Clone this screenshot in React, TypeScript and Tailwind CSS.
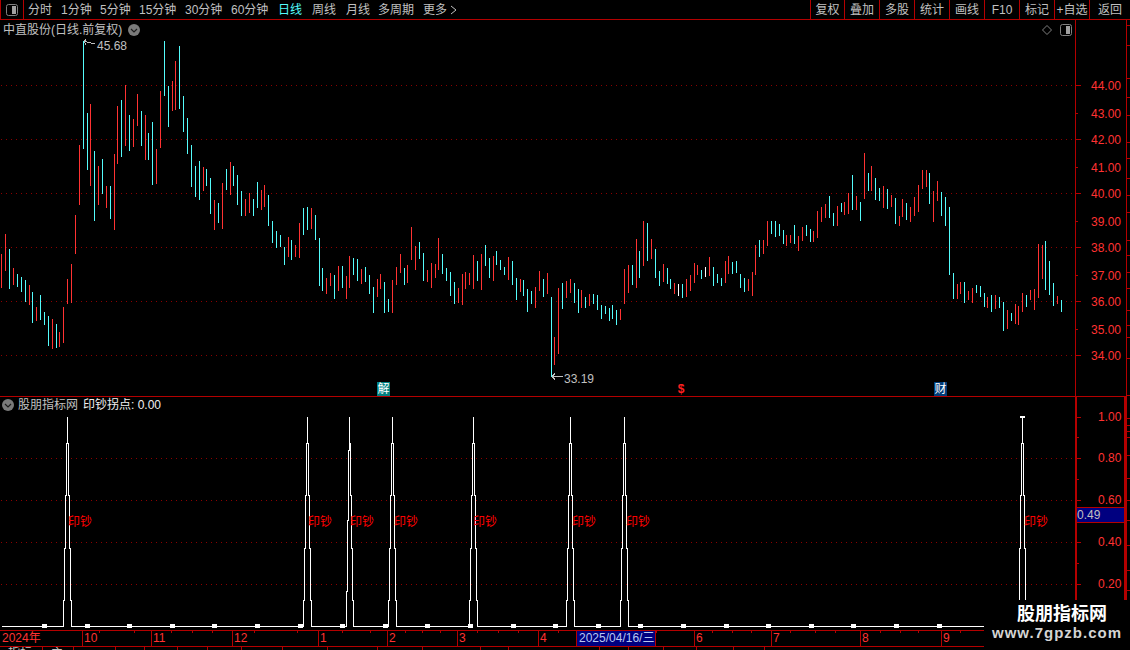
type Bar = [number, number, number, 'r' | 'c' | 'w'];

const BAR_COLORS = { r: '#ff3232', c: '#54fcfc', w: '#ffffff' };

// x, high y, low y, colour - read off the chart in page pixels
const BARS: Bar[] = [
  [1, 254, 287, 'r'], [5, 234, 270, 'r'], [9, 249, 288, 'c'], [13, 268, 284, 'r'], [17, 274, 286, 'c'],
  [21, 277, 291, 'c'], [25, 280, 301, 'c'], [29, 285, 304, 'r'], [32, 292, 322, 'c'], [36, 307, 320, 'r'],
  [40, 295, 319, 'c'], [44, 312, 324, 'c'], [48, 316, 345, 'c'], [52, 319, 348, 'r'], [56, 324, 347, 'c'],
  [59, 332, 346, 'r'], [63, 307, 342, 'r'], [67, 279, 303, 'r'], [71, 264, 302, 'r'], [75, 215, 253, 'r'],
  [79, 145, 204, 'r'], [83, 41, 148, 'c'], [87, 113, 169, 'c'], [90, 104, 185, 'r'], [94, 151, 220, 'c'],
  [98, 166, 204, 'r'], [102, 159, 193, 'c'], [106, 186, 207, 'r'], [110, 186, 218, 'c'], [114, 154, 229, 'r'],
  [117, 106, 163, 'r'], [121, 100, 156, 'c'], [125, 85, 145, 'r'], [129, 115, 150, 'c'], [133, 119, 146, 'r'],
  [137, 94, 125, 'r'], [141, 111, 145, 'c'], [145, 115, 159, 'r'], [148, 133, 159, 'c'], [152, 122, 184, 'c'],
  [156, 149, 183, 'r'], [160, 91, 147, 'r'], [164, 41, 95, 'c'], [168, 86, 126, 'c'], [172, 81, 110, 'r'],
  [175, 61, 109, 'r'], [179, 46, 108, 'c'], [183, 96, 131, 'c'], [187, 118, 153, 'c'], [191, 145, 186, 'c'],
  [195, 166, 196, 'c'], [199, 161, 199, 'c'], [203, 167, 190, 'r'], [206, 169, 185, 'c'], [210, 178, 213, 'c'],
  [214, 200, 229, 'r'], [218, 203, 222, 'c'], [222, 183, 228, 'r'], [226, 169, 189, 'c'], [230, 162, 194, 'r'],
  [233, 166, 185, 'c'], [237, 175, 204, 'c'], [241, 191, 215, 'c'], [245, 199, 215, 'r'], [249, 193, 212, 'r'],
  [253, 199, 215, 'c'], [257, 182, 207, 'c'], [261, 190, 209, 'r'], [264, 185, 206, 'r'], [268, 195, 225, 'c'],
  [272, 221, 242, 'c'], [276, 231, 247, 'c'], [280, 235, 246, 'c'], [284, 247, 264, 'c'], [288, 237, 256, 'r'],
  [291, 240, 259, 'c'], [295, 245, 256, 'r'], [299, 223, 257, 'r'], [303, 208, 234, 'c'], [307, 207, 229, 'c'],
  [311, 208, 228, 'r'], [315, 215, 239, 'c'], [319, 238, 285, 'c'], [322, 268, 290, 'c'], [326, 278, 293, 'r'],
  [330, 273, 285, 'r'], [334, 275, 298, 'c'], [338, 266, 290, 'r'], [342, 266, 287, 'c'], [346, 276, 298, 'r'],
  [349, 256, 287, 'r'], [353, 258, 274, 'c'], [357, 259, 280, 'c'], [361, 269, 283, 'r'], [365, 267, 281, 'c'],
  [369, 275, 293, 'c'], [373, 287, 312, 'c'], [377, 279, 296, 'r'], [380, 274, 288, 'r'], [384, 282, 312, 'c'],
  [388, 299, 311, 'c'], [392, 280, 312, 'r'], [396, 267, 284, 'r'], [400, 254, 272, 'r'], [404, 268, 284, 'c'],
  [407, 265, 282, 'r'], [411, 227, 259, 'r'], [415, 246, 269, 'r'], [419, 242, 258, 'c'], [423, 253, 280, 'c'],
  [427, 270, 281, 'r'], [431, 263, 287, 'r'], [435, 264, 277, 'r'], [438, 238, 269, 'r'], [442, 254, 273, 'c'],
  [446, 268, 280, 'c'], [450, 272, 295, 'c'], [454, 282, 303, 'c'], [458, 288, 302, 'r'], [462, 274, 304, 'r'],
  [465, 272, 288, 'r'], [469, 273, 284, 'r'], [473, 255, 288, 'r'], [477, 261, 280, 'c'], [481, 254, 289, 'r'],
  [485, 245, 265, 'c'], [489, 258, 277, 'c'], [493, 256, 280, 'r'], [496, 251, 264, 'c'], [500, 260, 269, 'c'],
  [504, 267, 274, 'c'], [508, 257, 279, 'r'], [512, 261, 284, 'c'], [516, 278, 299, 'c'], [520, 279, 291, 'r'],
  [523, 280, 295, 'c'], [527, 289, 311, 'c'], [531, 291, 303, 'c'], [535, 287, 307, 'r'], [539, 271, 290, 'r'],
  [543, 279, 296, 'c'], [547, 273, 293, 'r'], [551, 297, 376, 'c'], [554, 337, 364, 'r'], [558, 288, 353, 'r'],
  [562, 283, 308, 'c'], [566, 281, 297, 'r'], [570, 279, 292, 'r'], [574, 283, 302, 'c'], [578, 289, 312, 'c'],
  [581, 290, 307, 'r'], [585, 297, 307, 'c'], [589, 294, 305, 'r'], [593, 294, 303, 'c'], [597, 295, 309, 'c'],
  [601, 305, 318, 'c'], [605, 306, 313, 'c'], [609, 308, 320, 'c'], [612, 305, 318, 'c'], [616, 310, 324, 'c'],
  [620, 309, 319, 'r'], [624, 269, 303, 'r'], [628, 265, 292, 'r'], [632, 265, 284, 'c'], [636, 239, 287, 'r'],
  [639, 251, 277, 'c'], [643, 221, 265, 'r'], [647, 223, 260, 'c'], [651, 239, 258, 'r'], [655, 249, 277, 'c'],
  [659, 271, 285, 'c'], [663, 264, 281, 'r'], [667, 268, 283, 'c'], [670, 279, 288, 'c'], [674, 283, 293, 'r'],
  [678, 284, 295, 'w'], [682, 284, 297, 'c'], [686, 279, 296, 'r'], [690, 275, 290, 'r'], [694, 263, 282, 'r'],
  [697, 265, 274, 'r'], [701, 270, 278, 'c'], [705, 267, 276, 'w'], [709, 257, 275, 'r'], [713, 267, 285, 'c'],
  [717, 274, 282, 'c'], [721, 278, 285, 'c'], [725, 261, 282, 'r'], [728, 256, 273, 'r'], [732, 262, 273, 'c'],
  [736, 261, 272, 'c'], [740, 274, 287, 'c'], [744, 278, 291, 'c'], [748, 279, 290, 'r'], [752, 272, 295, 'r'],
  [755, 245, 274, 'r'], [759, 240, 256, 'c'], [763, 240, 253, 'r'], [767, 221, 245, 'r'], [771, 221, 233, 'c'],
  [775, 221, 236, 'c'], [779, 224, 235, 'c'], [783, 230, 243, 'c'], [786, 235, 245, 'r'], [790, 235, 242, 'r'],
  [794, 225, 243, 'c'], [798, 236, 250, 'r'], [802, 227, 240, 'r'], [806, 225, 235, 'c'], [810, 229, 241, 'c'],
  [813, 231, 241, 'r'], [817, 211, 237, 'r'], [821, 207, 221, 'r'], [825, 204, 217, 'r'], [829, 196, 217, 'c'],
  [833, 213, 225, 'c'], [837, 206, 225, 'r'], [841, 203, 211, 'c'], [844, 202, 214, 'r'], [848, 193, 213, 'r'],
  [852, 175, 209, 'c'], [856, 196, 209, 'r'], [860, 202, 220, 'c'], [864, 153, 198, 'r'], [868, 173, 190, 'c'],
  [871, 166, 190, 'r'], [875, 178, 199, 'c'], [879, 188, 200, 'c'], [883, 186, 207, 'r'], [887, 189, 208, 'c'],
  [891, 195, 206, 'r'], [895, 198, 223, 'c'], [899, 216, 225, 'r'], [902, 199, 216, 'r'], [906, 203, 219, 'c'],
  [910, 207, 221, 'r'], [914, 197, 215, 'r'], [918, 185, 211, 'r'], [922, 170, 188, 'r'], [926, 170, 186, 'r'],
  [929, 173, 203, 'c'], [933, 191, 221, 'r'], [937, 181, 200, 'r'], [941, 192, 215, 'c'], [945, 197, 225, 'c'],
  [949, 207, 274, 'c'], [953, 273, 298, 'c'], [957, 284, 298, 'r'], [960, 282, 293, 'r'], [964, 282, 302, 'c'],
  [968, 291, 299, 'r'], [972, 288, 302, 'r'], [976, 285, 292, 'c'], [980, 286, 296, 'c'], [984, 293, 306, 'c'],
  [987, 297, 307, 'r'], [991, 295, 311, 'c'], [995, 295, 308, 'r'], [999, 297, 307, 'c'], [1003, 302, 330, 'c'],
  [1007, 310, 328, 'r'], [1011, 313, 320, 'c'], [1015, 304, 323, 'r'], [1018, 306, 324, 'r'], [1022, 293, 311, 'r'],
  [1026, 295, 306, 'c'], [1030, 290, 299, 'r'], [1034, 289, 309, 'r'], [1038, 244, 297, 'r'], [1042, 245, 278, 'r'],
  [1045, 241, 289, 'c'], [1049, 261, 294, 'c'], [1053, 283, 305, 'c'], [1057, 296, 303, 'r'], [1061, 300, 311, 'c'],
];

const PERIOD_TABS = [
  { label: '分时', width: 'w-[24px]' },
  { label: '1分钟', width: 'w-[30px]' },
  { label: '5分钟', width: 'w-[30px]' },
  { label: '15分钟', width: 'w-[37px]' },
  { label: '30分钟', width: 'w-[37px]' },
  { label: '60分钟', width: 'w-[38px]' },
  { label: '日线', width: 'w-[25px]', active: true },
  { label: '周线', width: 'w-[25px]' },
  { label: '月线', width: 'w-[23px]' },
  { label: '多周期', width: 'w-[36px]' },
  { label: '更多', width: 'w-[24px]' },
];

const ACTIONS = [
  { label: '复权', width: 'w-[34px]' },
  { label: '叠加', width: 'w-[35px]' },
  { label: '多股', width: 'w-[35px]' },
  { label: '统计', width: 'w-[35px]' },
  { label: '画线', width: 'w-[35px]' },
  { label: 'F10', width: 'w-[35px]' },
  { label: '标记', width: 'w-[35px]' },
  { label: '+自选', width: 'w-[35px]' },
  { label: '返回', width: 'w-[41px]' },
];

const PRICES = ['44.00', '43.00', '42.00', '41.00', '40.00', '39.00', '38.00', '37.00', '36.00', '35.00', '34.00'];
const SIGNALS = ['1.00', '0.80', '0.60', '0.40', '0.20'];
const SPIKES = [67, 307, 392, 473, 570, 624, 1022];

const MONTHS = [
  { label: '2024年', width: 'w-[83px]', pad: 'pl-[2px]' },
  { label: '10', width: 'w-[69px]', pad: 'pl-px' },
  { label: '11', width: 'w-[81px]', pad: 'pl-px' },
  { label: '12', width: 'w-[86px]', pad: 'pl-px' },
  { label: '1', width: 'w-[69px]', pad: 'pl-px' },
  { label: '2', width: 'w-[70px]', pad: 'pl-px' },
  { label: '3', width: 'w-[81px]', pad: 'pl-px' },
  { label: '4', width: 'w-[38px]', pad: 'pl-px' },
];
const MONTHS_AFTER = [
  { label: '', width: 'w-[39px]' },
  { label: '6', width: 'w-[77px]' },
  { label: '7', width: 'w-[89px]' },
  { label: '8', width: 'w-[81px]' },
  { label: '9', width: 'w-[60px]' },
];
const TIME_TICKS = [
  99, 134, 171, 192, 212, 254, 297, 342, 370, 405, 422, 440, 477, 498, 518, 558, 656, 712, 732, 751, 790, 815, 835, 880,
  900, 918, 960,
];

const BOTTOM_TABS = [
  { label: '指标', width: 'w-[43px]' },
  { label: '主', width: 'w-[31px]' },
  { width: 'w-[42px]' },
  { width: 'w-[29px]' },
  { width: 'w-[33px]' },
  { width: 'w-[30px]' },
  { width: 'w-[34px]' },
  { width: 'w-[41px]' },
  { width: 'w-[45px]' },
  { width: 'w-[50px]' },
  { width: 'w-[45px]' },
  { width: 'w-[58px]' },
  { width: 'w-[28px]' },
  { width: 'w-[91px]' },
  { width: 'w-[29px]' },
  { width: 'w-[35px]' },
  { width: 'w-[33px]' },
  { width: 'w-[37px]' },
  { width: 'w-[31px]' },
];

const STRIP_TICKS = [
  25, 45, 78, 97, 115, 142, 158, 178, 195, 212, 240, 255, 272, 288, 310, 325, 337, 358, 395, 418, 425, 431, 437, 455, 478,
  500, 520, 545, 570, 590,
];

function spikePath(c: number) {
  return (
    `H${c - 4} V600 H${c - 3} V548 H${c - 2} V495 H${c - 1} V443 H${c} V416 V443 ` +
    `H${c + 1} V495 H${c + 2} V548 H${c + 3} V600 H${c + 4} V626`
  );
}

// the spike at 349 is not symmetrical in the original
const LOPSIDED_SPIKE = 'H346 V591 H347 V520 H348 V450 H349 V416 V443 H350 V495 H351 V548 H352 V600 H353 V626';

function CircleChevron() {
  return (
    <svg width="12" height="12" viewBox="0 0 12 12" className="shrink-0">
      <circle cx="6" cy="6" r="6" fill="#7a7a7a" />
      <path d="M3 5 L6 8 L9 5" fill="none" stroke="#1c1c1c" strokeWidth="1.2" />
    </svg>
  );
}

function PanelIcon() {
  return (
    <svg width="12" height="12" viewBox="0 0 12 12" className="shrink-0">
      <rect x="0.5" y="0.5" width="11" height="11" rx="2" fill="none" stroke="#808080" />
      <rect x="6" y="2" width="4" height="8" fill="#a0a0a0" />
    </svg>
  );
}

function PriceChart() {
  const gridYs = [85, 139, 193, 247, 301, 355];
  return (
    <div className="relative h-[376px] w-[1075px]">
      <svg width="1075" height="376" viewBox="0 20 1075 376" shapeRendering="crispEdges" className="block">
        {gridYs.map((y) => (
          <line key={y} x1="1" x2="1075" y1={y + 0.5} y2={y + 0.5} stroke="#8c0000" strokeDasharray="1 4" />
        ))}
        {BARS.map(([x, top, bottom, color]) => (
          <rect key={x} x={x} y={top} width="1" height={bottom - top + 1} fill={BAR_COLORS[color]} />
        ))}
        <g stroke="#c0c0c0" fill="none">
          <path d="M84 41.5 H87 M84 41.5 L86 39.5 M84 41.5 L86 44.5 M87 42.5 H91 M91 43.5 H95" />
          <path d="M552 376.5 H563 M552 376.5 L555 373.5 M552 376.5 L555 379.5" />
        </g>
      </svg>
      <div className="absolute left-[3px] top-[2px] flex h-[16px] items-center gap-[6px] text-[12px] text-[#c0c0c0]">
        <span>中直股份(日线.前复权)</span>
        <CircleChevron />
      </div>
      <div className="absolute right-[3px] top-[4px] flex items-center gap-[8px]">
        <svg width="10" height="10" viewBox="0 0 10 10">
          <path d="M5 0.5 L9.5 5 L5 9.5 L0.5 5 Z" fill="none" stroke="#808080" />
        </svg>
        <PanelIcon />
      </div>
      <span className="absolute left-[97px] top-[18px] text-[12px] leading-[16px] text-[#c0c0c0]">45.68</span>
      <span className="absolute left-[564px] top-[351px] text-[12px] leading-[16px] text-[#c0c0c0]">33.19</span>
      <span className="absolute left-[377px] top-[362px] flex h-[14px] w-[13px] items-center justify-center bg-[#008080] text-[12px] text-white">
        解
      </span>
      <span className="absolute left-[677px] top-[362px] flex h-[14px] w-[8px] items-center justify-center text-[12px] font-bold text-[#ff2020]">
        $
      </span>
      <span className="absolute left-[934px] top-[362px] flex h-[14px] w-[13px] items-center justify-center bg-[#003c78] text-[12px] text-white">
        财
      </span>
    </div>
  );
}

function PriceAxis() {
  return (
    <div className="flex h-[376px] w-[51px] flex-col border-l border-[#b40000] pt-[52px]">
      {PRICES.map((price, i) => (
        <div key={price} className={`flex h-[27px] items-center ${i % 2 ? 'pt-[2px]' : ''}`}>
          <span className={`h-px bg-[#b40000] ${i % 2 ? 'w-[2px]' : 'w-[5px]'}`} />
          <span className={`text-[12px] text-[#ff3232] ${i % 2 ? 'ml-[13px]' : 'ml-[10px]'}`}>{price}</span>
        </div>
      ))}
    </div>
  );
}

function SignalChart() {
  const [first, ...rest] = SPIKES;
  const baseline = ['M1 626', spikePath(first), spikePath(rest[0]), LOPSIDED_SPIKE, ...rest.slice(1).map(spikePath), 'H1075'];
  return (
    <div className="relative h-[233px] w-[1075px]">
      <svg width="1075" height="233" viewBox="0 397 1075 233" shapeRendering="crispEdges" className="block">
        {[458, 500, 542, 584].map((y) => (
          <line key={y} x1="1" x2="1075" y1={y + 0.5} y2={y + 0.5} stroke="#8c0000" strokeDasharray="1 4" />
        ))}
        <path d={baseline.join(' ')} transform="translate(0.5 0.5)" fill="none" stroke="#ffffff" />
        <rect x="1020" y="416" width="5" height="2" fill="#ffffff" />
        {Array.from({ length: 22 }, (_, i) => Math.round(44 + i * 42.6)).map((x) => (
          <rect key={x} x={x - 2} y="624" width="5" height="4" fill="#ffffff" />
        ))}
      </svg>
      <div className="absolute left-[2px] top-[2px] flex h-[12px] items-center text-[12px]">
        <CircleChevron />
        <span className="ml-[4px] text-[#c0c0c0]">股朋指标网</span>
        <span className="ml-[5px] text-[#f0f0f0]">印钞拐点: 0.00</span>
      </div>
      {[68, 308, 350, 394, 473, 572, 626, 1024].map((x) => (
        <span key={x} className="absolute top-[117px] text-[12px] leading-[16px] text-[#ff0000]" style={{ left: x }}>
          印钞
        </span>
      ))}
    </div>
  );
}

function SignalAxis() {
  return (
    <div className="relative h-[233px] w-[51px] border-x-2 border-[#b40000]">
      <div className="-mt-[2px] flex flex-col">
        {SIGNALS.map((value, i) => (
          <div key={value} className={`relative flex h-[42px] items-center ${i === 0 ? 'pt-[2px]' : ''}`}>
            <span className="h-px w-[4px] bg-[#b40000]" />
            <span className="ml-[17px] text-[12px] text-[#ff3232]">{value}</span>
            <span className="absolute -bottom-px left-0 h-px w-[2px] bg-[#b40000]" />
          </div>
        ))}
      </div>
      <div className="absolute -left-px top-[110px] flex h-[16px] w-[49px] items-center border border-[#b40000] bg-[#000080] text-[12px] text-[#c0c0c0]">
        <span>0.49</span>
      </div>
    </div>
  );
}

function TimeAxis() {
  return (
    <div className="relative flex h-[17px] border-y border-[#b40000] text-[12px] leading-[15px] text-[#ff3232]">
      {MONTHS.map((month) => (
        <div key={month.label} className={`${month.width} ${month.pad} shrink-0 border-r border-[#b40000]`}>
          {month.label}
        </div>
      ))}
      <div className="w-[79px] shrink-0 border-r border-[#b40000] bg-[#000080] pl-[2px] whitespace-nowrap text-[#b8c8f0]">
        2025/04/16/三
      </div>
      {MONTHS_AFTER.map((month) => (
        <div key={month.width} className={`${month.width} shrink-0 border-r border-[#b40000] pl-px`}>
          {month.label}
        </div>
      ))}
      <svg width="1126" height="3" className="absolute left-0 top-0" shapeRendering="crispEdges">
        {TIME_TICKS.map((x) => (
          <rect key={x} x={x} y="0" width="1" height="2" fill="#b40000" />
        ))}
      </svg>
    </div>
  );
}

export default function App() {
  return (
    <div className="relative h-[650px] w-[1130px] overflow-hidden bg-black font-['Liberation_Sans','Noto_Sans_CJK_SC',sans-serif] text-[12px]">
      <header className="flex h-[20px] border-b border-[#b40000] text-[#c0c0c0]">
        <div className="flex w-[24px] shrink-0 items-center justify-center border-x border-[#b40000]">
          <PanelIcon />
        </div>
        <nav className="ml-[4px] flex items-center gap-[9px] whitespace-nowrap">
          {PERIOD_TABS.map((tab) => (
            <span key={tab.label} className={`${tab.width} ${tab.active ? 'text-[#54fcfc]' : ''}`}>
              {tab.label}
            </span>
          ))}
          <svg width="8" height="10" viewBox="0 0 8 10" className="-ml-[6px]">
            <path d="M1 1 L6 5 L1 9" fill="none" stroke="#c0c0c0" />
          </svg>
        </nav>
        <div className="ml-auto flex">
          {ACTIONS.map((action) => (
            <div
              key={action.label}
              className={`${action.width} flex items-center justify-center border-l border-[#b40000] whitespace-nowrap`}
            >
              {action.label}
            </div>
          ))}
        </div>
      </header>

      <div className="flex">
        <div className="w-[1126px]">
          <div className="flex">
            <PriceChart />
            <PriceAxis />
          </div>
          <div className="h-px bg-[#b40000]" />
          <div className="flex">
            <SignalChart />
            <SignalAxis />
          </div>
          <TimeAxis />
          <div className="flex h-[3px] overflow-hidden text-[12px] leading-[12px] text-[#c0c0c0]">
            {BOTTOM_TABS.map((tab, i) => (
              <div key={i} className={`${tab.width} shrink-0 border-r border-[#b40000] pl-[8px]`}>
                {tab.label}
              </div>
            ))}
          </div>
        </div>
        <div className="h-[610px] w-[4px] border-l border-[#b40000]">
          <svg width="3" height="610" viewBox="0 20 3 610" shapeRendering="crispEdges" className="block">
            {STRIP_TICKS.map((y) => (
              <rect key={y} x="0" y={y} width="3" height="1" fill="#b40000" />
            ))}
          </svg>
        </div>
      </div>

      <div className="absolute bottom-0 right-0 flex h-[50px] w-[146px] flex-col items-center bg-black pl-[10px]">
        <span className="h-[25px] font-['Noto_Sans_CJK_SC',sans-serif] text-[18px] leading-[25px] font-bold text-white">
          股朋指标网
        </span>
        <span className="-ml-[10px] text-[15px] leading-[16px] font-bold tracking-[1px] text-[#d4d4d4]">www.7gpzb.com</span>
      </div>
    </div>
  );
}
